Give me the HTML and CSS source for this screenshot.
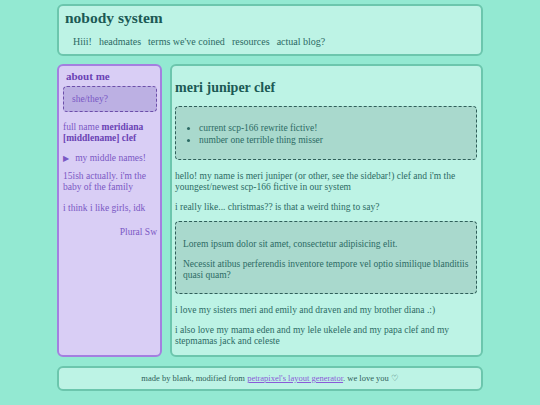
FILE: index.html
```html
<!DOCTYPE html>
<html>
<head>
<meta charset="utf-8">
<link rel="stylesheet" href="styles.css">
</head>
<body>
<div class="wrap">
  <header class="box header">
    <h1 class="site-title">nobody system</h1>
    <nav class="nav">
      <a>Hiii!</a>
      <a>headmates</a>
      <a>terms we've coined</a>
      <a>resources</a>
      <a>actual blog?</a>
    </nav>
  </header>
  <div class="columns">
    <aside class="sidebar">
      <h2 class="side-title">about me</h2>
      <div class="side-dash">she/they?</div>
      <p class="side-p first">full name <b>meridiana</b><br><b>[middlename] clef</b></p>
      <details class="side-details"><summary>my middle names!</summary></details>
      <p class="side-p after-details">15ish actually. i'm the baby of the family</p>
      <p class="side-p">i think i like girls, idk</p>
      <div class="plural">Plural Sw</div>
    </aside>
    <main class="box main">
      <h2 class="main-title">meri juniper clef</h2>
      <div class="dash list-dash">
        <ul class="list">
          <li>current scp-166 rewrite fictive!</li>
          <li>number one terrible thing misser</li>
        </ul>
      </div>
      <p class="p">hello! my name is meri juniper (or other, see the sidebar!) clef and i'm the youngest/newest scp-166 fictive in our system</p>
      <p class="p">i really like... christmas?? is that a weird thing to say?</p>
      <div class="dash lorem-dash">
        <p class="p">Lorem ipsum dolor sit amet, consectetur adipisicing elit.</p>
        <p class="p">Necessit atibus perferendis inventore tempore vel optio similique blanditiis quasi quam?</p>
      </div>
      <p class="p">i love my sisters meri and emily and draven and my brother diana .:)</p>
      <p class="p">i also love my mama eden and my lele ukelele and my papa clef and my stepmamas jack and celeste</p>
    </main>
  </div>
  <footer class="box footer">made by blank, modified from <a class="flink">petrapixel's layout generator</a>. we love you ♡</footer>
</div>
</body>
</html>
```
FILE: styles.css
```css
html, body {
  margin: 0;
  padding: 0;
}
body {
  background: #93e9d2;
  font-family: "Liberation Serif", "DejaVu Serif", serif;
  color: #2c6a64;
}
.wrap {
  width: 426px;
  margin: 0 auto;
  padding-top: 4px;
}
.box {
  background: #bdf3e5;
  border: 2px solid #6cc6ad;
  border-radius: 6px;
  box-sizing: border-box;
}
.header {
  height: 52px;
  padding: 3px 6px 0 6px;
}
.site-title {
  margin: 0;
  font-size: 15.5px;
  line-height: 18px;
  color: #1c5a55;
  font-weight: bold;
}
.nav {
  display: flex;
  gap: 7px;
  margin-top: 9px;
  padding-left: 8px;
  font-size: 10px;
  line-height: 12px;
}
.nav a {
  color: #2c6a64;
}
.columns {
  display: flex;
  gap: 8px;
  margin-top: 8px;
  height: 293px;
}
.sidebar {
  width: 105px;
  flex: none;
  box-sizing: border-box;
  background: #d9cef5;
  border: 2px solid #a47fe0;
  border-radius: 6px;
  padding: 3px 3px 0 2px;
  color: #7a58c4;
  font-size: 9.5px;
  line-height: 11px;
  overflow: hidden;
}
.side-title {
  margin: 0 0 0 5px;
  font-size: 11px;
  line-height: 14px;
  font-weight: bold;
  color: #6a42b4;
}
.side-dash {
  margin: 3px 0 0 2px;
  height: 26px;
  box-sizing: border-box;
  background: #bcb0e3;
  border: 1px dashed #6c4eaa;
  border-radius: 4px;
  padding: 6px 0 0 8px;
  line-height: 12px;
}
.side-p {
  margin: 10px 0 0 2px;
  line-height: 11px;
}
.side-p.first {
  margin-top: 10px;
}
.side-p.after-details {
  margin-top: 7px;
}
.side-p b {
  color: #6a42b4;
}
.side-details {
  margin: 9px 0 0 2px;
}
.side-details summary {
  cursor: pointer;
  list-style: none;
}
.side-details summary::before {
  content: "▶";
  font-size: 8px;
  margin-right: 6px;
}
.plural {
  margin-top: 13px;
  text-align: right;
  white-space: nowrap;
}
.main {
  flex: 1;
  padding: 13px 4px 0 3px;
  font-size: 9.5px;
  line-height: 11px;
  overflow: hidden;
}
.main-title {
  margin: 0;
  font-size: 14px;
  line-height: 18px;
  color: #1c5a55;
  font-weight: bold;
}
.dash {
  background: #a9d9cd;
  border: 1px dashed #2f5f5a;
  border-radius: 4px;
  box-sizing: border-box;
}
.list-dash {
  margin-top: 9px;
  height: 54px;
  padding-top: 15px;
}
.list {
  margin: 0;
  padding-left: 23px;
  line-height: 12px;
}
.p {
  margin: 9px 0 0 0;
}
.list-dash + .p {
  margin-top: 11px;
}
.lorem-dash {
  margin-top: 8px;
  height: 73px;
  padding: 13px 2px 0 7px;
}
.lorem-dash .p:first-child {
  margin-top: 4px;
}
.lorem-dash .p {
  margin-top: 9px;
}
.lorem-dash + .p {
  margin-top: 11px;
}
.footer {
  margin-top: 9px;
  height: 25px;
  text-align: center;
  font-size: 8.5px;
  line-height: 21px;
  color: #2f5f5a;
}
.flink {
  color: #8a5ad8;
  text-decoration: underline;
}
```
